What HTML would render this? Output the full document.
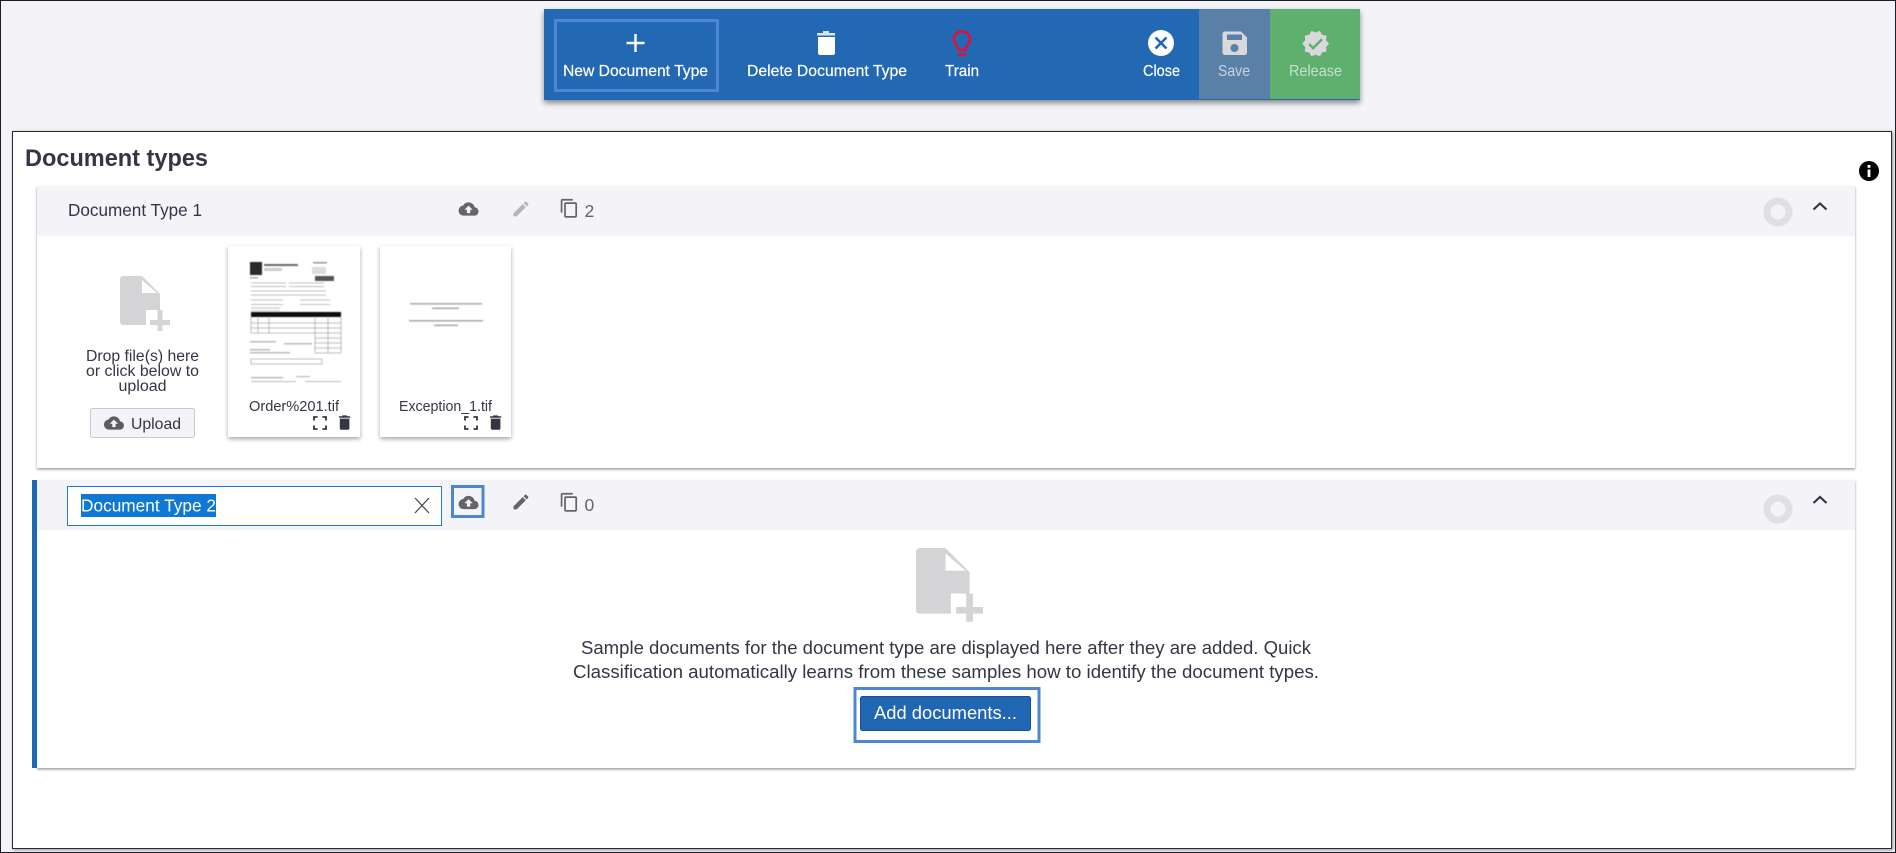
<!DOCTYPE html>
<html lang="en">
<head>
<meta charset="utf-8">
<title>Document types</title>
<style>
html,body{margin:0;padding:0;width:1896px;height:853px;overflow:hidden;background:#f3f3f8}
svg{display:block;position:absolute;left:0;top:0}
text{font-family:"Liberation Sans",Arial,sans-serif;fill:#333645}
.w{fill:#fff;font-size:16px;stroke:#fff;stroke-width:.2px}
.m{fill:#c9d2dd;font-size:16px}
.r{fill:#c6e0cb;font-size:16px}
</style>
</head>
<body>
<svg width="1896" height="853" viewBox="0 0 1896 853" xmlns="http://www.w3.org/2000/svg">
<defs>
<filter id="tb" x="-5%" y="-20%" width="110%" height="150%"><feDropShadow dx="0" dy="3" stdDeviation="3" flood-color="#000" flood-opacity=".45"/></filter>
<filter id="cs" x="-10%" y="-10%" width="120%" height="120%"><feDropShadow dx="0" dy="2" stdDeviation="2" flood-color="#000" flood-opacity=".35"/></filter>
<filter id="ps" x="-2%" y="-5%" width="104%" height="110%"><feDropShadow dx="0" dy="1.5" stdDeviation="1.2" flood-color="#000" flood-opacity=".4"/></filter>
<filter id="ms" x="-1%" y="-1%" width="102%" height="102%"><feDropShadow dx="1" dy="1" stdDeviation="1.5" flood-color="#000" flood-opacity=".4"/></filter>
<filter id="bl"><feGaussianBlur stdDeviation=".4"/></filter>
<path id="cloud" d="M19.35 10.04C18.67 6.59 15.64 4 12 4 9.11 4 6.6 5.64 5.35 8.04 2.34 8.36 0 10.91 0 14c0 3.31 2.69 6 6 6h13c2.76 0 5-2.24 5-5 0-2.64-2.05-4.78-4.65-4.96zM14 13v4h-4v-4H7l5-5 5 5h-3z"/>
<path id="pen" d="M3 17.25V21h3.75L17.81 9.94l-3.75-3.75L3 17.25zM20.71 7.04c.39-.39.39-1.02 0-1.41l-2.34-2.34c-.39-.39-1.02-.39-1.41 0l-1.83 1.83 3.75 3.75 1.83-1.83z"/>
<path id="copy" d="M16 1H4c-1.1 0-2 .9-2 2v14h2V3h12V1zm3 4H8c-1.1 0-2 .9-2 2v14c0 1.1.9 2 2 2h11c1.1 0 2-.9 2-2V7c0-1.1-.9-2-2-2zm0 16H8V7h11v14z"/>
<path id="trash" d="M6 19c0 1.1.9 2 2 2h8c1.1 0 2-.9 2-2V7H6v12zM19 4h-3.5l-1-1h-5l-1 1H5v2h14V4z"/>
<g id="expand" fill="none" stroke="#333645" stroke-width="1.8">
  <path d="M1 4.5V1h3.5M9.5 1H13v3.5M13 9.5V13H9.5M4.5 13H1V9.5"/>
</g>
<g id="docadd">
  <path d="M3 0H22L40 18V49H3C1.3 49 0 47.7 0 46V3C0 1.3 1.3 0 3 0Z" fill="#d4d4d7"/>
  <path d="M22 4V17H37Z" fill="#fff"/>
  <path d="M26 34H50V55H26Z" fill="#fff"/>
  <path d="M37.5 34H42.5V44H50V49H42.5V55H37.5V49H30V44H37.5Z" fill="#d4d4d7"/>
</g>
</defs>

<!-- page frame -->
<rect x="0" y="0" width="1896" height="853" fill="#f3f3f8"/>

<!-- toolbar -->
<rect x="544" y="9" width="816" height="91" fill="#2067b3" filter="url(#tb)"/>
<rect x="1199" y="9" width="71" height="90" fill="#5a80a8"/>
<rect x="1270" y="9" width="90" height="90" fill="#5fb06f"/>
<rect x="555.5" y="20.5" width="162" height="70" fill="none" stroke="#4d87d0" stroke-width="3"/>
<path d="M635.5 34V52M626.5 43H644.5" stroke="#fff" stroke-width="2.4" fill="none"/>
<text class="w" x="563" y="76" textLength="145" lengthAdjust="spacingAndGlyphs">New Document Type</text>
<!-- trash -->
<path d="M817 33H835V35.5H817Z M823 31H829V33H823Z" fill="#d8e6f5"/>
<path d="M818 37H835V53C835 54.2 834 55 833 55H820C819 55 818 54.2 818 53Z" fill="#fff"/>
<text class="w" x="747" y="76" textLength="160" lengthAdjust="spacingAndGlyphs">Delete Document Type</text>
<!-- bulb -->
<path d="M962 31.5C957 31.5 954 35.2 954 39.2C954 43.5 957.5 45 958.6 50H965.4C966.5 45 970 43.5 970 39.2C970 35.2 967 31.5 962 31.5Z" fill="none" stroke="#ee0a33" stroke-width="2.4"/>
<rect x="958" y="53.5" width="8" height="2.4" fill="#ee0a33"/>
<text class="w" x="945" y="76" textLength="34" lengthAdjust="spacingAndGlyphs">Train</text>
<!-- close -->
<circle cx="1161" cy="43" r="13" fill="#fff"/>
<path d="M1155.5 37.5L1166.5 48.5M1166.5 37.5L1155.5 48.5" stroke="#2067b3" stroke-width="2.6"/>
<text class="w" x="1143" y="76" textLength="37" lengthAdjust="spacingAndGlyphs">Close</text>
<!-- save -->
<path d="M1225 31.5H1241L1247 37.5V52.5C1247 53.9 1246 55 1244.5 55H1225C1223.6 55 1222.5 53.9 1222.5 52.5V34C1222.5 32.6 1223.6 31.5 1225 31.5Z" fill="#d9d9dc"/>
<rect x="1227" y="34.5" width="15" height="5.5" fill="#5a80a8"/>
<circle cx="1234.5" cy="48" r="4" fill="#5a80a8"/>
<text class="m" x="1218" y="76" textLength="32" lengthAdjust="spacingAndGlyphs">Save</text>
<!-- release -->
<g transform="translate(1301,29) scale(1.22)"><path d="M23 12l-2.44-2.78.34-3.68-3.61-.82-1.89-3.18L12 3 8.6 1.54 6.71 4.72l-3.61.81.34 3.68L1 12l2.44 2.78-.34 3.69 3.61.82 1.89 3.18L12 21l3.4 1.46 1.89-3.18 3.61-.82-.34-3.68L23 12z" fill="#d9d9dc"/><path d="M6.7 12.4L10 15.7 17.2 8.4" fill="none" stroke="#5fb06f" stroke-width="2"/></g>
<text class="r" x="1289" y="76" textLength="53" lengthAdjust="spacingAndGlyphs">Release</text>

<!-- main panel -->
<rect x="12.5" y="131.5" width="1879" height="717" fill="#fff" stroke="#2a2a34" filter="url(#ms)"/>
<rect x=".5" y=".5" width="1895" height="852" fill="none" stroke="#1c1c24"/>
<text x="25" y="166" font-size="24" font-weight="700" textLength="183" lengthAdjust="spacingAndGlyphs">Document types</text>
<circle cx="1869" cy="171" r="10" fill="#000"/>
<rect x="1867.6" y="165" width="2.8" height="2.8" fill="#fff"/>
<rect x="1867.6" y="169.5" width="2.8" height="7.5" fill="#fff"/>

<!-- row 1 -->
<rect x="37" y="186" width="1818" height="282" fill="#fff" filter="url(#ps)"/>
<rect x="37" y="186" width="1818" height="50" fill="#f3f3f8"/>
<text x="68" y="216" font-size="17.5" textLength="134" lengthAdjust="spacingAndGlyphs">Document Type 1</text>
<use href="#cloud" transform="translate(458.6,199) scale(.83)" fill="#646469"/>
<use href="#pen" transform="translate(511,199) scale(.83)" fill="#b5b5b9"/>
<use href="#copy" transform="translate(559,198) scale(.86)" fill="#646469"/>
<text x="584.5" y="217" font-size="17.5" style="fill:#646469">2</text>
<circle cx="1778" cy="212" r="11" fill="none" stroke="#e0e0e4" stroke-width="7"/>
<path d="M1813.5 209.5L1820 203.5L1826.5 209.5" fill="none" stroke="#333645" stroke-width="2.2"/>

<use href="#docadd" x="120" y="276"/>
<g font-size="15.5" text-anchor="middle">
<text x="142.5" y="361" textLength="113" lengthAdjust="spacingAndGlyphs">Drop file(s) here</text>
<text x="142.5" y="376" textLength="113" lengthAdjust="spacingAndGlyphs">or click below to</text>
<text x="142.5" y="391" textLength="48" lengthAdjust="spacingAndGlyphs">upload</text>
</g>
<rect x="90.5" y="408.5" width="104" height="29" rx="2" fill="#f3f3f8" stroke="#c8c8ce"/>
<use href="#cloud" transform="translate(104,413) scale(.83)" fill="#5c5c62"/>
<text x="131" y="429" font-size="16" textLength="50" lengthAdjust="spacingAndGlyphs">Upload</text>

<!-- card 1 -->
<rect x="228" y="246" width="132" height="191" fill="#fff" filter="url(#cs)"/>
<g filter="url(#bl)">
  <rect x="250" y="262" width="12" height="13" fill="#2a2a2a"/>
  <rect x="264" y="295" width="0" height="0"/>
  <rect x="264" y="296" width="0" height="0"/>
  <rect x="264" y="264" width="34" height="2" fill="#666"/>
  <rect x="264" y="268" width="18" height="3" fill="#ccc"/>
  <rect x="313" y="262" width="14" height="1.5" fill="#999"/>
  <rect x="312" y="267" width="14" height="7" fill="#ddd"/>
  <rect x="315" y="276" width="19" height="5" fill="#555"/>
  <rect x="250" y="277" width="8" height="1.5" fill="#aaa"/>
  <g fill="none" stroke="#aaa" stroke-width=".8">
    <rect x="250.5" y="318" width="0" height="0"/>
    <rect x="250.5" y="318" width="0" height="0"/>
    <path d="M251 283H286M289 283H324M251 286.5H286M289 286.5H324M251 291H326M251 295H326M251 300H283M300 300H330M251 304.5H283M300 304.5H330"/>
    <path d="M251 308H280M251 311H280"/>
    <path d="M251 317V333M258 317V333M269 317V333M315 317V353M328 317V353M341 317V353M251 323H341M251 328H341M251 333H341M315 338H341M315 343H341M315 348H341M315 353H341"/>
    <path d="M251 359H322M251 364H322M251 359V364M322 359V364"/>
  </g>
  <rect x="251" y="312" width="90" height="5" fill="#111"/>
  <rect x="250" y="341" width="26" height="1.5" fill="#bbb"/><rect x="284" y="343" width="28" height="1.5" fill="#bbb"/>
  <rect x="250" y="349" width="20" height="1.5" fill="#bbb"/><rect x="250" y="352" width="40" height="1.5" fill="#bbb"/>
  <rect x="251" y="377" width="32" height="1.2" fill="#aaa"/><rect x="296" y="376" width="14" height="1.2" fill="#bbb"/>
  <rect x="251" y="381" width="45" height="1" fill="#bbb"/><rect x="305" y="381" width="36" height="1" fill="#bbb"/>
</g>
<text x="294" y="411" font-size="15" text-anchor="middle" textLength="90" lengthAdjust="spacingAndGlyphs">Order%201.tif</text>
<use href="#expand" x="313" y="416"/>
<use href="#trash" transform="translate(335,413) scale(.8)" fill="#333645"/>

<!-- card 2 -->
<rect x="380" y="246" width="131" height="191" fill="#fff" filter="url(#cs)"/>
<g filter="url(#bl)" fill="#aaa">
  <rect x="410" y="303" width="72" height="1.6"/>
  <rect x="432" y="307.5" width="27" height="1.6"/>
  <rect x="409" y="320" width="74" height="1.6"/>
  <rect x="434" y="324.5" width="24" height="1.6"/>
</g>
<text x="445.5" y="411" font-size="15" text-anchor="middle" textLength="93" lengthAdjust="spacingAndGlyphs">Exception_1.tif</text>
<use href="#expand" x="464" y="416"/>
<use href="#trash" transform="translate(486,413) scale(.8)" fill="#333645"/>

<!-- row 2 -->
<rect x="37" y="480" width="1818" height="288" fill="#fff" filter="url(#ps)"/>
<rect x="37" y="480" width="1818" height="50" fill="#f3f3f8"/>
<rect x="32" y="480" width="5" height="288" fill="#2067b3"/>
<rect x="67.5" y="486.5" width="374" height="39" fill="#fff" stroke="#1e7ad6"/>
<rect x="81" y="494" width="135" height="23" fill="#0f78d4"/>
<text x="81" y="511.5" font-size="17.5" style="fill:#fff" textLength="135" lengthAdjust="spacingAndGlyphs">Document Type 2</text>
<path d="M415 498L429 513M429 498L415 513" stroke="#444" stroke-width="1.2" fill="none"/>
<rect x="452.5" y="486.5" width="30.5" height="30" fill="none" stroke="#4d87d0" stroke-width="3"/>
<use href="#cloud" transform="translate(458.6,492.5) scale(.83)" fill="#646469"/>
<use href="#pen" transform="translate(511,492) scale(.83)" fill="#646469"/>
<use href="#copy" transform="translate(559,492) scale(.86)" fill="#646469"/>
<text x="584.5" y="511" font-size="17.5" style="fill:#646469">0</text>
<circle cx="1778" cy="509" r="11" fill="none" stroke="#e0e0e4" stroke-width="7"/>
<path d="M1813.5 503L1820 497L1826.5 503" fill="none" stroke="#333645" stroke-width="2.2"/>

<use href="#docadd" transform="translate(916,548) scale(1.34)"/>
<text x="581" y="654" font-size="18" textLength="730" lengthAdjust="spacingAndGlyphs">Sample documents for the document type are displayed here after they are added. Quick</text>
<text x="573" y="678" font-size="18" textLength="746" lengthAdjust="spacingAndGlyphs">Classification automatically learns from these samples how to identify the document types.</text>
<rect x="855" y="688.5" width="184" height="53" fill="#fff" stroke="#4d87d0" stroke-width="3"/>
<rect x="860.5" y="696.5" width="170" height="34" rx="2" fill="#2067b3" stroke="#1a4f8f"/>
<text x="874" y="719" font-size="18" style="fill:#fff" textLength="143" lengthAdjust="spacingAndGlyphs">Add documents...</text>
</svg>
</body>
</html>
